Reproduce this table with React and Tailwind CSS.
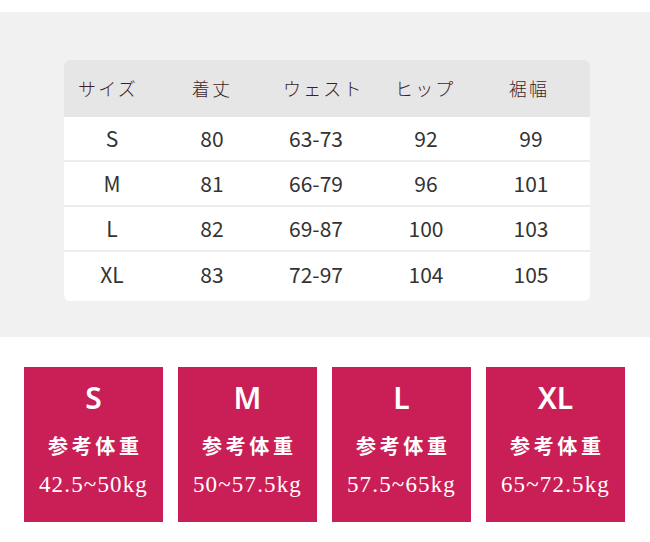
import React from 'react';

const rows = [
  ['S', '80', '63-73', '92', '99'],
  ['M', '81', '66-79', '96', '101'],
  ['L', '82', '69-87', '100', '103'],
  ['XL', '83', '72-97', '104', '105'],
];

const weights = [
  ['S', '42.5~50kg'],
  ['M', '50~57.5kg'],
  ['L', '57.5~65kg'],
  ['XL', '65~72.5kg'],
];

const cols = 'grid grid-cols-[96px_104px_104px_116px_94px]';

function App() {
  return (
    <div className="w-[650px] h-[542px] bg-white pt-[12px] font-['Noto_Sans_CJK_JP',sans-serif]">
      <div className="bg-[#f1f1f1] h-[325px] pt-[48px] pl-[64px]">
        <div className="w-[526px] h-[241px] bg-white rounded-md overflow-hidden">
          <div className={`${cols} h-[57px] items-center bg-[#e6e6e6] text-[18px] font-light text-[#3f1f1f] tracking-[0.12em]`}>
            <div className="pl-[14px]">サイズ</div>
            <div className="text-center">着丈</div>
            <div className="pl-[19px]">ウェスト</div>
            <div className="pl-[27px]">ヒップ</div>
            <div className="text-center pr-[4px]">裾幅</div>
          </div>
          {rows.map((r, i) => (
            <div
              key={r[0]}
              className={`${cols} items-center text-[21px] text-[#333] ${i < 3 ? 'h-[45px] border-b-2 border-[#ececec]' : 'h-[49px] pb-[4px]'}`}
            >
              {r.map((c, j) => (
                <div key={j} className="text-center">{c}</div>
              ))}
            </div>
          ))}
        </div>
      </div>
      <div className="flex gap-[15px] pl-[24px] pt-[30px]">
        {weights.map(([s, w]) => (
          <div key={s} className="w-[139px] h-[155px] bg-[#c91f56] flex flex-col items-center text-white">
            <div className="mt-[14px] h-[34px] leading-[34px] text-[30px] font-semibold font-['Noto_Sans',sans-serif]">{s}</div>
            <div className="mt-[18px] text-[20px] font-bold tracking-[0.18em] pl-[0.18em] leading-[26px]">参考体重</div>
            <div className="mt-[12px] text-[23px] leading-[28px] font-['Liberation_Serif',serif] tracking-[0.05em]">{w}</div>
          </div>
        ))}
      </div>
    </div>
  );
}

export default App;
